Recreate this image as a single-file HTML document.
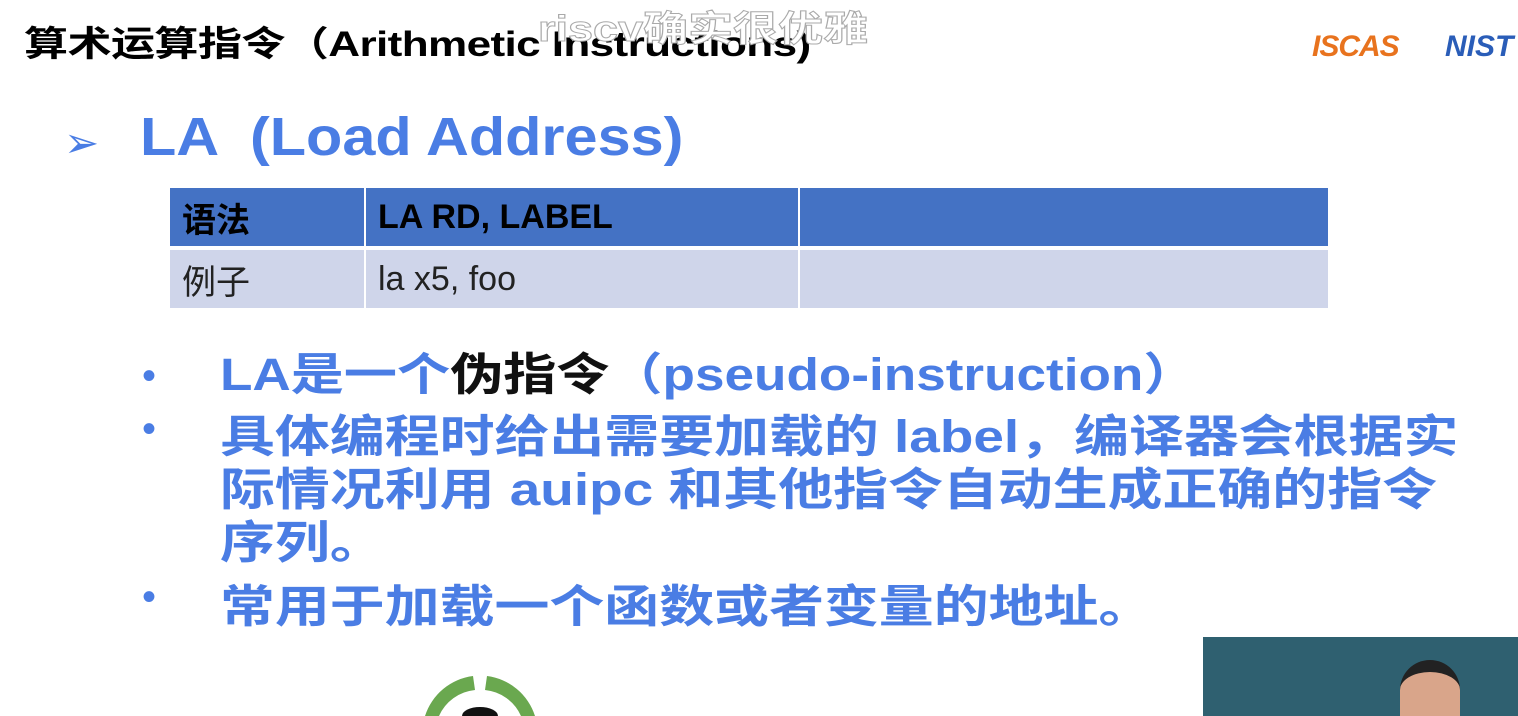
<!DOCTYPE html><html style="overflow:hidden;height:716px"><head><meta charset="utf-8"><style>
body{margin:0;width:1518px;height:716px;background:#fff;overflow:hidden;position:relative;font-family:"Liberation Sans","Noto Sans CJK SC",sans-serif}
.a{position:absolute;white-space:nowrap;transform-origin:0 0}
.b{color:#4a7de4;font-weight:bold;font-size:45px;line-height:53px}
td{padding:0 12px;font-size:34px;height:58px}
</style></head><body>
<div class="a" style="left:24px;top:16px;font-size:35px;font-weight:bold;letter-spacing:-0.5px;transform:scaleX(1.26)">算术运算指令（Arithmetic Instructions)</div>
<div class="a" style="left:538px;top:0px;font-size:36px;color:#fff;-webkit-text-stroke:1px #aaa;font-weight:bold;transform:scaleX(1.25)">riscv确实很优雅</div>
<div class="a" style="left:1312px;top:30px;font-size:30px;font-weight:bold;font-style:italic;color:#e8731e;letter-spacing:-1px">ISCAS</div>
<div class="a" style="left:1445px;top:30px;font-size:30px;font-weight:bold;font-style:italic;color:#2a5db8">NIST</div>
<div class="a" style="left:64px;top:118px;font-size:42px;color:#4a7de4">➢</div>
<div class="a" style="left:140px;top:106px;font-size:54px;font-weight:bold;color:#4a7de4;transform:scaleX(1.1)">LA &nbsp;(Load Address)</div>
<table style="position:absolute;left:170px;top:188px;border-collapse:collapse" cellspacing="0">
<tr style="background:#4472c4;font-weight:bold"><td style="width:170px;border-right:2px solid #fff;border-bottom:4px solid #fff">语法</td><td style="width:408px;border-right:2px solid #fff;border-bottom:4px solid #fff">LA RD, LABEL</td><td style="width:504px;border-bottom:4px solid #fff"></td></tr>
<tr style="background:#cfd5ea;color:#222"><td style="border-right:2px solid #fff">例子</td><td style="border-right:2px solid #fff">la x5, foo</td><td></td></tr>
</table>
<div class="a" style="left:142px;top:350px;color:#4a7de4;font-size:40px;line-height:53px">•<br>•</div>
<div class="a" style="left:142px;top:575px;color:#4a7de4;font-size:40px">•</div>
<div class="a b" style="left:220px;top:348px;transform:scaleX(1.18)">LA是一个<span style="color:#111">伪指令</span>（pseudo-instruction）</div>
<div class="a b" style="left:220px;top:410px;transform:scaleX(1.22)">具体编程时给出需要加载的 label，编译器会根据实<br>际情况利用 auipc 和其他指令自动生成正确的指令<br>序列。</div>
<div class="a b" style="left:220px;top:580px;transform:scaleX(1.22)">常用于加载一个函数或者变量的地址。</div>
<div class="a" style="left:1203px;top:637px;width:315px;height:79px;background:#2f6070;overflow:hidden"><div style="position:absolute;left:197px;top:23px;width:60px;height:60px;border-radius:30px 30px 0 0;background:#d9a58a;border-top:12px solid #222"></div></div>
<svg class="a" style="left:395px;top:668px" width="170" height="48"><path d="M30 48 A58 58 0 0 1 78 8 L80 22 A44 44 0 0 0 44 48Z M92 8 A58 58 0 0 1 140 48 L126 48 A44 44 0 0 0 90 22Z" fill="#6aa84f"/><ellipse cx="85" cy="48" rx="18" ry="9" fill="#111"/></svg>
</body></html>
